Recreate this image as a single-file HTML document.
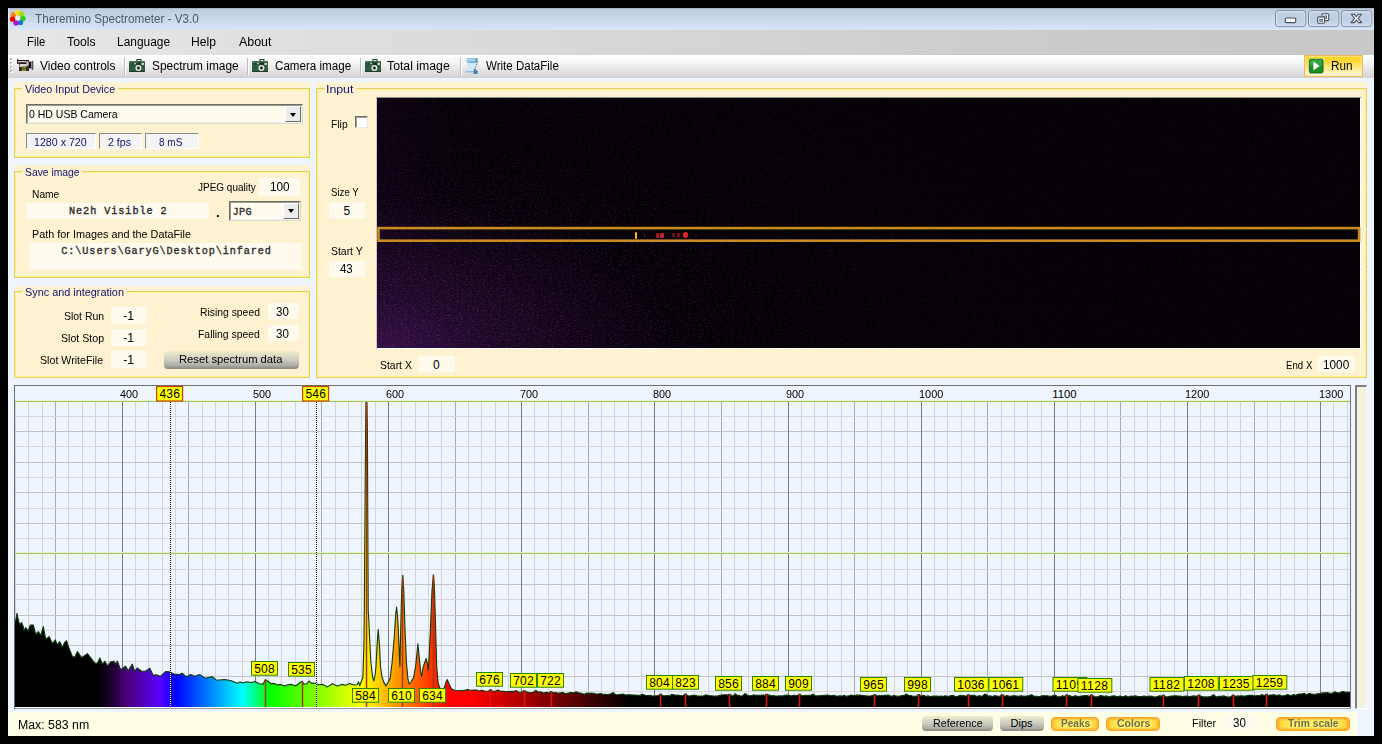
<!DOCTYPE html>
<html><head><meta charset="utf-8"><title>Theremino Spectrometer</title>
<style>
html,body{margin:0;padding:0;}
body{width:1382px;height:744px;background:#000;position:relative;overflow:hidden;font-family:'Liberation Sans', sans-serif;}
.a{position:absolute;box-sizing:border-box;}
.t{position:absolute;white-space:pre;line-height:normal;margin:0;padding:0;transform-origin:0 0;}

.grp{background:#FEF2D0;}
.gb{border:1px solid #F3D774;}
.fld{background:#FFFAEE;}
.sunk{border-top:1px solid #8A8A8A;border-left:1px solid #8A8A8A;border-bottom:1px solid #FFFFFF;border-right:1px solid #FFFFFF;background:#F4F4F4;}
.btn{border-radius:4px;background:linear-gradient(#F2EEC6 0%,#DEDEC8 22%,#CCCCC0 50%,#AEAEA4 80%,#85857E 100%);}
.btny{border-radius:4px;border:1px solid #FFA424;background:linear-gradient(#FFB02A 0%,rgba(255,214,60,0) 24%,rgba(255,214,60,0) 74%,#FFB22C 100%),linear-gradient(90deg,#FFAC28 0%,#FFD640 6%,#FFEE5E 20%,#FFF066 80%,#FFD640 94%,#FFAC28 100%);}
.emb{text-shadow:1px 1px 0 #FFF27A;}

</style></head><body>
<div class="a " style="left:8px;top:8px;width:1366px;height:728px;background:#EEF5FE;"></div>
<div class="a " style="left:8px;top:8px;width:1366px;height:22px;background:linear-gradient(#BCCBDD 0%,#C9D8EA 45%,#D6E5F7 100%);border-left:1px solid rgba(235,242,250,.8);border-top:1px solid #A9B6C6;"></div>
<svg class="a" style="left:8px;top:8px" width="20" height="20" viewBox="0 0 20 20">
<g>
<circle cx="5.4" cy="7" r="2.7" fill="#FF7E10"/>
<circle cx="9.3" cy="4.7" r="2.7" fill="#FFD81A"/>
<circle cx="13.7" cy="6.2" r="2.7" fill="#98E010"/>
<circle cx="15" cy="10.6" r="2.7" fill="#34C818"/>
<circle cx="12.6" cy="14.6" r="2.6" fill="#0A7ACC"/>
<circle cx="8.1" cy="14.9" r="2.7" fill="#A416D6"/>
<circle cx="4.6" cy="11.3" r="2.7" fill="#E60808"/>
<circle cx="9.7" cy="10.1" r="2.4" fill="#E6EEF8"/>
</g></svg><svg class="a" style="left:1270px;top:8px" width="104" height="22" viewBox="0 0 104 22">
<defs><linearGradient id="wb" x1="0" y1="0" x2="0" y2="1"><stop offset="0" stop-color="#C6D3E4"/><stop offset=".5" stop-color="#BFCEE2"/><stop offset="1" stop-color="#C9D9EC"/></linearGradient></defs>
<g fill="url(#wb)" stroke="#7C8AA0" stroke-width="1">
<rect x="5.5" y="2.6" width="30.2" height="16" rx="3"/>
<rect x="38.5" y="2.6" width="30.2" height="16" rx="3"/>
<rect x="71.5" y="2.6" width="30.2" height="16" rx="3"/>
</g>
<g fill="none" stroke="#DCE6F2" stroke-width="1" opacity=".8">
<rect x="6.5" y="3.6" width="28.2" height="14" rx="2"/>
<rect x="39.5" y="3.6" width="28.2" height="14" rx="2"/>
<rect x="72.5" y="3.6" width="28.2" height="14" rx="2"/>
</g>
<rect x="15.3" y="10" width="10.4" height="4.6" rx="1.2" fill="#FAFBFD" stroke="#4A5464" stroke-width="1.2"/>
<g stroke="#4A5464" stroke-width="1.1">
<rect x="51.9" y="5.8" width="6.8" height="6.8" rx="1" fill="#F6F8FB"/>
<rect x="54" y="8" width="2.6" height="2.4" fill="#B4C2D6" stroke-width=".8"/>
<rect x="47.7" y="8.9" width="6.8" height="6.4" rx="1" fill="#F6F8FB"/>
<rect x="49.8" y="11.2" width="2.6" height="2" fill="#B4C2D6" stroke-width=".8"/>
</g>
<path d="M81.2 6.2 L84.2 6.2 L86.4 8.6 L88.6 6.2 L91.6 6.2 L88.1 10.4 L91.8 14.6 L88.7 14.6 L86.4 12.1 L84.1 14.6 L81 14.6 L84.7 10.4 Z" fill="#FAFBFD" stroke="#4A5464" stroke-width="1.1" stroke-linejoin="round"/>
</svg><div class="a " style="left:8px;top:30px;width:1366px;height:24.5px;background:linear-gradient(90deg,#E6E6E6 0%,#DADADA 35%,#CACACA 80%,#C8C8C8 100%);"></div>
<div class="a " style="left:8px;top:54.5px;width:1366px;height:23.5px;background:linear-gradient(#FFFFFF 0%,#F6F6F6 30%,#E4E4E4 65%,#D2D2D2 100%);"></div>
<div class="a " style="left:10px;top:58px;width:2px;height:2px;background:#A8A8A8;"></div>
<div class="a " style="left:11px;top:59px;width:2px;height:2px;background:#FFFFFF;"></div>
<div class="a " style="left:10px;top:62px;width:2px;height:2px;background:#A8A8A8;"></div>
<div class="a " style="left:11px;top:63px;width:2px;height:2px;background:#FFFFFF;"></div>
<div class="a " style="left:10px;top:66px;width:2px;height:2px;background:#A8A8A8;"></div>
<div class="a " style="left:11px;top:67px;width:2px;height:2px;background:#FFFFFF;"></div>
<div class="a " style="left:10px;top:70px;width:2px;height:2px;background:#A8A8A8;"></div>
<div class="a " style="left:11px;top:71px;width:2px;height:2px;background:#FFFFFF;"></div>
<svg class="a" style="left:16px;top:58px" width="18" height="15" viewBox="0 0 18 15">
<rect x="1" y="1.2" width="1.3" height="4.6" fill="#1E1E1E"/>
<rect x="3" y="2" width="10" height="11" fill="#303030"/>
<rect x="2" y="2" width="10.8" height="1.1" fill="#1A1A1A"/>
<rect x="2.6" y="3.1" width="7.6" height="1.4" fill="#D6D6D6"/>
<rect x="2.2" y="4.5" width="8.2" height="1.4" fill="#1E1E1E"/>
<rect x="3.6" y="6" width="7" height="3" fill="#DADADA"/>
<rect x="10.4" y="3.4" width="2.2" height="4.4" fill="#EAB4BE"/>
<rect x="3.2" y="9.4" width="9.8" height="3.6" fill="#2C2C2C"/>
<rect x="5.9" y="8.2" width="4.2" height="4.8" fill="#86862E"/>
<rect x="6.4" y="10" width="3.2" height="1" fill="#4A4A20"/>
<rect x="13" y="3.7" width="2.3" height="6.6" fill="#0A0A0A"/>
<rect x="15.2" y="3" width="1.9" height="8.8" fill="#8C8C8C"/>
<rect x="16.3" y="3" width="0.9" height="8.8" fill="#3A3A3A"/>
</svg><div class="a " style="left:124px;top:58px;width:1px;height:17px;background:#BDBDBD;"></div>
<div class="a " style="left:125px;top:58px;width:1px;height:17px;background:#FFFFFF;"></div>
<svg class="a" style="left:127.8px;top:58px" width="18" height="15" viewBox="0 0 18 15">
<rect x="8.9" y="1.6" width="4" height="2.6" fill="#FFFFFF" stroke="#1F3F30" stroke-width="1.1"/>
<path d="M2 2.9 H16 L17 3.9 V12.9 L16 13.9 H2 L1 12.9 V3.9 Z" fill="#2E5A44"/>
<path d="M2 2.9 H16 L17 3.9 V5 H1 V3.9 Z" fill="#44705A"/>
<rect x="12" y="4" width="5" height="9.2" fill="#37593F"/>
<rect x="1" y="12.9" width="16" height="1" fill="#1C3A2A"/>
<rect x="8.6" y="4.4" width="4.4" height="2.4" fill="#173224"/>
<rect x="4" y="5" width="1.6" height="1.6" fill="#153022"/>
<rect x="6" y="5" width="2" height="1.2" fill="#9CC8AC"/>
<rect x="13.6" y="4.9" width="2.2" height="2" fill="#D8F0E0"/>
<circle cx="10.4" cy="9.9" r="3" fill="#E4EAE0"/>
<path d="M10.4 8.4V11.6M8.9 10H11.9" stroke="#14281C" stroke-width="1.5"/>
</svg><div class="a " style="left:247px;top:58px;width:1px;height:17px;background:#BDBDBD;"></div>
<div class="a " style="left:248px;top:58px;width:1px;height:17px;background:#FFFFFF;"></div>
<svg class="a" style="left:250.8px;top:58px" width="18" height="15" viewBox="0 0 18 15">
<rect x="8.9" y="1.6" width="4" height="2.6" fill="#FFFFFF" stroke="#1F3F30" stroke-width="1.1"/>
<path d="M2 2.9 H16 L17 3.9 V12.9 L16 13.9 H2 L1 12.9 V3.9 Z" fill="#2E5A44"/>
<path d="M2 2.9 H16 L17 3.9 V5 H1 V3.9 Z" fill="#44705A"/>
<rect x="12" y="4" width="5" height="9.2" fill="#37593F"/>
<rect x="1" y="12.9" width="16" height="1" fill="#1C3A2A"/>
<rect x="8.6" y="4.4" width="4.4" height="2.4" fill="#173224"/>
<rect x="4" y="5" width="1.6" height="1.6" fill="#153022"/>
<rect x="6" y="5" width="2" height="1.2" fill="#9CC8AC"/>
<rect x="13.6" y="4.9" width="2.2" height="2" fill="#D8F0E0"/>
<circle cx="10.4" cy="9.9" r="3" fill="#E4EAE0"/>
<path d="M10.4 8.4V11.6M8.9 10H11.9" stroke="#14281C" stroke-width="1.5"/>
</svg><div class="a " style="left:360px;top:58px;width:1px;height:17px;background:#BDBDBD;"></div>
<div class="a " style="left:361px;top:58px;width:1px;height:17px;background:#FFFFFF;"></div>
<svg class="a" style="left:364.2px;top:58px" width="18" height="15" viewBox="0 0 18 15">
<rect x="8.9" y="1.6" width="4" height="2.6" fill="#FFFFFF" stroke="#1F3F30" stroke-width="1.1"/>
<path d="M2 2.9 H16 L17 3.9 V12.9 L16 13.9 H2 L1 12.9 V3.9 Z" fill="#2E5A44"/>
<path d="M2 2.9 H16 L17 3.9 V5 H1 V3.9 Z" fill="#44705A"/>
<rect x="12" y="4" width="5" height="9.2" fill="#37593F"/>
<rect x="1" y="12.9" width="16" height="1" fill="#1C3A2A"/>
<rect x="8.6" y="4.4" width="4.4" height="2.4" fill="#173224"/>
<rect x="4" y="5" width="1.6" height="1.6" fill="#153022"/>
<rect x="6" y="5" width="2" height="1.2" fill="#9CC8AC"/>
<rect x="13.6" y="4.9" width="2.2" height="2" fill="#D8F0E0"/>
<circle cx="10.4" cy="9.9" r="3" fill="#E4EAE0"/>
<path d="M10.4 8.4V11.6M8.9 10H11.9" stroke="#14281C" stroke-width="1.5"/>
</svg><div class="a " style="left:459.5px;top:58px;width:1px;height:17px;background:#BDBDBD;"></div>
<div class="a " style="left:460.5px;top:58px;width:1px;height:17px;background:#FFFFFF;"></div>
<svg class="a" style="left:463px;top:57px" width="17" height="18" viewBox="0 0 17 18">
<defs><linearGradient id="rl" x1="0" y1="0" x2="0" y2="1"><stop offset="0" stop-color="#6FB0DC"/><stop offset=".35" stop-color="#B4E2FA"/><stop offset="1" stop-color="#5C9CCC"/></linearGradient></defs>
<path d="M4.3 5.4 L15 4.6 L13.4 8 L12.2 11.4 L11.2 14.8 L2.3 14.8 L3.4 11 Z" fill="#D3E7F9"/>
<path d="M15 4.6 L13.4 8 L12.2 11.4 L11.2 14.8" fill="none" stroke="#5E7E9E" stroke-width=".9" stroke-dasharray="1.4 1"/>
<rect x="3.3" y="1" width="11.2" height="4.7" rx="2" fill="url(#rl)"/>
<rect x="12.6" y="1.2" width="2" height="4.3" rx="1" fill="#7890A4"/>
<path d="M10.3 14.8 L11.6 11.6 L15 14.4 L14 17 L10.8 17 Z" fill="#3F7FB8"/>
<path d="M2.3 14.8 L10.5 14.8" stroke="#7AA6CC" stroke-width="1"/>
</svg><div class="a " style="left:1304px;top:55px;width:59px;height:22.2px;border:1px solid #EDB85A;background:linear-gradient(#FFD21E 0%,#FFD93C 28%,#FFE88A 62%,#FFF5CC 92%,#FFF9E0 100%);box-shadow:inset 0 0 0 1px rgba(255,240,190,.55);"></div>
<svg class="a" style="left:1308px;top:58px" width="17" height="17" viewBox="0 0 17 17">
<rect x="0.5" y="0.4" width="15.4" height="15.4" rx="1.6" fill="#FFF8DC" opacity=".9"/>
<rect x="1.3" y="1.2" width="13.8" height="13.8" rx="1.4" fill="#1C8E28" stroke="#0C6A18" stroke-width=".9"/>
<rect x="2" y="1.9" width="12.4" height="5.6" rx="1" fill="#52B45A" opacity=".55"/>
<path d="M5.4 3.6 L11.6 8.1 L5.4 12.6 Z" fill="#FFFFFF"/>
</svg><div class="a grp" style="left:14px;top:82px;width:296.4px;height:76px;"></div>
<div class="a " style="left:14px;top:88px;width:296px;height:70px;border:1px solid #E3CC72;box-shadow:inset 0 0 0 1px #FFF382;"></div>
<div class="a " style="left:22.0px;top:88px;width:95.5px;height:2px;background:#FEF2D0;"></div>
<div class="a " style="left:26px;top:104px;width:276.5px;height:20px;border-top:1px solid #6E6E64;border-left:1px solid #6E6E64;border-bottom:1px solid #DADAD0;border-right:1px solid #DADAD0;background:#FFFAEE;"></div>
<div class="a " style="left:27px;top:105px;width:274.5px;height:18px;border-top:1px solid #9C9C90;border-left:1px solid #9C9C90;border-bottom:1px solid #F2F2EA;border-right:1px solid #F2F2EA;"></div>
<div class="a " style="left:285px;top:106px;width:16px;height:16px;background:#EDEDED;border-top:1px solid #FFFFFF;border-left:1px solid #FFFFFF;border-bottom:1px solid #6E6E6E;border-right:1px solid #6E6E6E;"><div class="a" style="left:3.5px;top:5.5px;width:0;height:0;border-left:3.5px solid transparent;border-right:3.5px solid transparent;border-top:4px solid #000"></div></div>
<div class="a sunk" style="left:26px;top:133px;width:69.5px;height:15.5px;"></div>
<div class="a sunk" style="left:99px;top:133px;width:43px;height:15.5px;"></div>
<div class="a sunk" style="left:145px;top:133px;width:53.5px;height:15.5px;"></div>
<div class="a grp" style="left:14px;top:165px;width:296.4px;height:113px;"></div>
<div class="a " style="left:14px;top:171px;width:296px;height:107px;border:1px solid #E3CC72;box-shadow:inset 0 0 0 1px #FFF382;"></div>
<div class="a " style="left:22.0px;top:171px;width:59.5px;height:2px;background:#FEF2D0;"></div>
<div class="a fld" style="left:259px;top:178px;width:40.5px;height:18px;"></div>
<div class="a fld" style="left:26px;top:203px;width:183px;height:16px;"></div>
<div class="a " style="left:229px;top:200.5px;width:72px;height:20px;border-top:1px solid #6E6E64;border-left:1px solid #6E6E64;border-bottom:1px solid #DADAD0;border-right:1px solid #DADAD0;background:#FFFAEE;"></div>
<div class="a " style="left:230px;top:201.5px;width:70px;height:18px;border-top:1px solid #9C9C90;border-left:1px solid #9C9C90;border-bottom:1px solid #F2F2EA;border-right:1px solid #F2F2EA;"></div>
<div class="a " style="left:283px;top:202.5px;width:16px;height:16px;background:#EDEDED;border-top:1px solid #FFFFFF;border-left:1px solid #FFFFFF;border-bottom:1px solid #6E6E6E;border-right:1px solid #6E6E6E;"><div class="a" style="left:3.5px;top:5.5px;width:0;height:0;border-left:3.5px solid transparent;border-right:3.5px solid transparent;border-top:4px solid #000"></div></div>
<div class="a fld" style="left:29px;top:242.5px;width:273px;height:27px;"></div>
<div class="a grp" style="left:14px;top:286px;width:296.4px;height:92px;"></div>
<div class="a " style="left:14px;top:291px;width:296px;height:87px;border:1px solid #E3CC72;box-shadow:inset 0 0 0 1px #FFF382;"></div>
<div class="a " style="left:22.0px;top:291px;width:104.5px;height:2px;background:#FEF2D0;"></div>
<div class="a fld" style="left:111px;top:307px;width:36px;height:17px;"></div>
<div class="a fld" style="left:111px;top:329px;width:36px;height:17px;"></div>
<div class="a fld" style="left:111px;top:351px;width:36px;height:17px;"></div>
<div class="a fld" style="left:268px;top:303px;width:30px;height:16px;"></div>
<div class="a fld" style="left:268px;top:325px;width:30px;height:16px;"></div>
<div class="a btn" style="left:163.5px;top:350.5px;width:135px;height:18.5px;"></div>
<div class="a grp" style="left:316px;top:82px;width:1051.4px;height:296px;"></div>
<div class="a " style="left:316px;top:88px;width:1051px;height:290px;border:1px solid #E3CC72;box-shadow:inset 0 0 0 1px #FFF382;"></div>
<div class="a " style="left:324.5px;top:88px;width:32.5px;height:2px;background:#FEF2D0;"></div>
<div class="a " style="left:355px;top:115.5px;width:12.5px;height:12.5px;border-top:1px solid #6E6E6E;border-left:1px solid #6E6E6E;border-bottom:1px solid #E8E8E8;border-right:1px solid #E8E8E8;background:#FFFFFF;box-shadow:1px 1px 0 0 #9A9A9A inset;"></div>
<div class="a fld" style="left:329px;top:202px;width:36px;height:16px;"></div>
<div class="a fld" style="left:329px;top:260.5px;width:36px;height:16px;"></div>
<div class="a fld" style="left:419px;top:356px;width:36px;height:16px;"></div>
<div class="a fld" style="left:1318px;top:356px;width:36px;height:16px;"></div>
<div class="a " style="left:375.5px;top:96.5px;width:985px;height:252px;background:#FFFFFF;border-top:1px solid #8E8E8E;border-left:1px solid #C8C8C8;"></div>
<div class="a " style="left:376.5px;top:97.5px;width:983.6px;height:250.3px;background:radial-gradient(ellipse 300px 150px at 0% 100%, rgba(60,20,78,.8) 0%, rgba(44,14,58,.5) 40%, rgba(20,6,26,0) 100%),linear-gradient(90deg, rgba(22,7,30,.4) 0%, rgba(12,4,16,.18) 8%, rgba(6,3,8,.05) 20%, rgba(4,2,5,0) 30%),#040204;"></div>
<svg class="a" style="left:376.5px;top:97.5px" width="984" height="250">
<defs>
<filter id="nz" x="0" y="0" width="100%" height="100%" color-interpolation-filters="sRGB">
<feTurbulence type="fractalNoise" baseFrequency="0.45 0.8" numOctaves="2" seed="11" result="n"/>
<feColorMatrix in="n" type="matrix" values="0 0 0 0 0.34  0 0 0 0 0.10  0 0 0 0 0.44  2.2 1.2 0 0 -1.62"/>
</filter>
<radialGradient id="nzm" gradientUnits="userSpaceOnUse" cx="0" cy="250" r="700" gradientTransform="translate(0,250) scale(1,0.5) translate(0,-250)"><stop offset="0" stop-color="#fff" stop-opacity="1"/><stop offset=".3" stop-color="#fff" stop-opacity=".55"/><stop offset=".6" stop-color="#fff" stop-opacity=".28"/><stop offset="1" stop-color="#fff" stop-opacity=".14"/></radialGradient>
<mask id="nzk"><rect width="984" height="250" fill="url(#nzm)"/></mask>
</defs>
<g mask="url(#nzk)"><rect width="984" height="250" filter="url(#nz)"/></g>
</svg><svg class="a" style="left:370px;top:220px" width="1000" height="30" viewBox="370 220 1000 30"><rect x="378.5" y="228.1" width="980.6" height="12.6" fill="none" stroke="#C98A1E" stroke-width="2.6"/></svg><div class="a " style="left:634.5px;top:231.5px;width:2.2px;height:7px;background:#F4B038;border-radius:1px;box-shadow:0 0 1px #A04000;"></div>
<div class="a " style="left:643.5px;top:233.5px;width:1.5px;height:3px;background:#602000;"></div>
<div class="a " style="left:655.5px;top:232.5px;width:3.5px;height:5px;background:#B01818;border-radius:1px;"></div>
<div class="a " style="left:660px;top:232.5px;width:3.5px;height:5px;background:#C82020;border-radius:1px;"></div>
<div class="a " style="left:672px;top:233px;width:3px;height:4px;background:#641010;"></div>
<div class="a " style="left:677px;top:233px;width:3px;height:4px;background:#781010;"></div>
<div class="a " style="left:683px;top:232px;width:4.5px;height:6px;background:#D42828;border-radius:2px;"></div>
<div class="a " style="left:695px;top:233.5px;width:1.5px;height:3px;background:#3A0808;"></div>
<div class="a " style="left:8px;top:711.5px;width:1348.5px;height:24.5px;background:#FFFFE6;"></div>
<div class="a " style="left:14px;top:385px;width:1337px;height:323.5px;background:#EEF5FE;border:1px solid #6E6E6E;border-right-color:#727478;border-bottom-color:#9A9A9A;"></div>
<div class="a " style="left:15px;top:707.0px;width:1335px;height:1px;background:#FFFFFF;"></div>
<svg class="a" style="left:0;top:0" width="1382" height="744" viewBox="0 0 1382 744">
<defs><linearGradient id="sp" gradientUnits="userSpaceOnUse" x1="15" y1="0" x2="1350" y2="0">
<stop offset="0" stop-color="#000"/>
<stop offset="0.06115" stop-color="#000000"/>
<stop offset="0.07262" stop-color="#1E0030"/>
<stop offset="0.08359" stop-color="#48007A"/>
<stop offset="0.09556" stop-color="#5200B8"/>
<stop offset="0.10853" stop-color="#5800FF"/>
<stop offset="0.11651" stop-color="#1C00FF"/>
<stop offset="0.12050" stop-color="#0000FF"/>
<stop offset="0.14544" stop-color="#0080FF"/>
<stop offset="0.17038" stop-color="#00FFFF"/>
<stop offset="0.18035" stop-color="#00FF80"/>
<stop offset="0.19033" stop-color="#00FF00"/>
<stop offset="0.22524" stop-color="#80FF00"/>
<stop offset="0.26015" stop-color="#FFFF00"/>
<stop offset="0.29208" stop-color="#FF8000"/>
<stop offset="0.32499" stop-color="#FF0000"/>
<stop offset="0.34195" stop-color="#FF0000"/>
<stop offset="0.36988" stop-color="#C40000"/>
<stop offset="0.39981" stop-color="#800000"/>
<stop offset="0.42973" stop-color="#400000"/>
<stop offset="0.46165" stop-color="#000000"/>
<stop offset="1" stop-color="#000"/></linearGradient>
<clipPath id="pc"><rect x="15" y="386" width="1335" height="321.0"/></clipPath></defs>
<g shape-rendering="crispEdges"><path d="M15.5 402V707.0" stroke="#D3D3D3" stroke-width="1"/><path d="M28.5 402V707.0" stroke="#D3D3D3" stroke-width="1"/><path d="M42.5 402V707.0" stroke="#D3D3D3" stroke-width="1"/><path d="M55.5 402V707.0" stroke="#ABABAB" stroke-width="1"/><path d="M68.5 402V707.0" stroke="#D3D3D3" stroke-width="1"/><path d="M82.5 402V707.0" stroke="#D3D3D3" stroke-width="1"/><path d="M95.5 402V707.0" stroke="#D3D3D3" stroke-width="1"/><path d="M108.5 402V707.0" stroke="#D3D3D3" stroke-width="1"/><path d="M135.5 402V707.0" stroke="#D3D3D3" stroke-width="1"/><path d="M148.5 402V707.0" stroke="#D3D3D3" stroke-width="1"/><path d="M162.5 402V707.0" stroke="#D3D3D3" stroke-width="1"/><path d="M175.5 402V707.0" stroke="#D3D3D3" stroke-width="1"/><path d="M188.5 402V707.0" stroke="#ABABAB" stroke-width="1"/><path d="M202.5 402V707.0" stroke="#D3D3D3" stroke-width="1"/><path d="M215.5 402V707.0" stroke="#D3D3D3" stroke-width="1"/><path d="M228.5 402V707.0" stroke="#D3D3D3" stroke-width="1"/><path d="M242.5 402V707.0" stroke="#D3D3D3" stroke-width="1"/><path d="M268.5 402V707.0" stroke="#D3D3D3" stroke-width="1"/><path d="M281.5 402V707.0" stroke="#D3D3D3" stroke-width="1"/><path d="M295.5 402V707.0" stroke="#D3D3D3" stroke-width="1"/><path d="M308.5 402V707.0" stroke="#D3D3D3" stroke-width="1"/><path d="M321.5 402V707.0" stroke="#ABABAB" stroke-width="1"/><path d="M335.5 402V707.0" stroke="#D3D3D3" stroke-width="1"/><path d="M348.5 402V707.0" stroke="#D3D3D3" stroke-width="1"/><path d="M361.5 402V707.0" stroke="#D3D3D3" stroke-width="1"/><path d="M375.5 402V707.0" stroke="#D3D3D3" stroke-width="1"/><path d="M401.5 402V707.0" stroke="#D3D3D3" stroke-width="1"/><path d="M415.5 402V707.0" stroke="#D3D3D3" stroke-width="1"/><path d="M428.5 402V707.0" stroke="#D3D3D3" stroke-width="1"/><path d="M441.5 402V707.0" stroke="#D3D3D3" stroke-width="1"/><path d="M455.5 402V707.0" stroke="#ABABAB" stroke-width="1"/><path d="M468.5 402V707.0" stroke="#D3D3D3" stroke-width="1"/><path d="M481.5 402V707.0" stroke="#D3D3D3" stroke-width="1"/><path d="M495.5 402V707.0" stroke="#D3D3D3" stroke-width="1"/><path d="M508.5 402V707.0" stroke="#D3D3D3" stroke-width="1"/><path d="M534.5 402V707.0" stroke="#D3D3D3" stroke-width="1"/><path d="M548.5 402V707.0" stroke="#D3D3D3" stroke-width="1"/><path d="M561.5 402V707.0" stroke="#D3D3D3" stroke-width="1"/><path d="M574.5 402V707.0" stroke="#D3D3D3" stroke-width="1"/><path d="M588.5 402V707.0" stroke="#ABABAB" stroke-width="1"/><path d="M601.5 402V707.0" stroke="#D3D3D3" stroke-width="1"/><path d="M614.5 402V707.0" stroke="#D3D3D3" stroke-width="1"/><path d="M628.5 402V707.0" stroke="#D3D3D3" stroke-width="1"/><path d="M641.5 402V707.0" stroke="#D3D3D3" stroke-width="1"/><path d="M668.5 402V707.0" stroke="#D3D3D3" stroke-width="1"/><path d="M681.5 402V707.0" stroke="#D3D3D3" stroke-width="1"/><path d="M694.5 402V707.0" stroke="#D3D3D3" stroke-width="1"/><path d="M708.5 402V707.0" stroke="#D3D3D3" stroke-width="1"/><path d="M721.5 402V707.0" stroke="#ABABAB" stroke-width="1"/><path d="M734.5 402V707.0" stroke="#D3D3D3" stroke-width="1"/><path d="M748.5 402V707.0" stroke="#D3D3D3" stroke-width="1"/><path d="M761.5 402V707.0" stroke="#D3D3D3" stroke-width="1"/><path d="M774.5 402V707.0" stroke="#D3D3D3" stroke-width="1"/><path d="M801.5 402V707.0" stroke="#D3D3D3" stroke-width="1"/><path d="M814.5 402V707.0" stroke="#D3D3D3" stroke-width="1"/><path d="M827.5 402V707.0" stroke="#D3D3D3" stroke-width="1"/><path d="M841.5 402V707.0" stroke="#D3D3D3" stroke-width="1"/><path d="M854.5 402V707.0" stroke="#ABABAB" stroke-width="1"/><path d="M867.5 402V707.0" stroke="#D3D3D3" stroke-width="1"/><path d="M881.5 402V707.0" stroke="#D3D3D3" stroke-width="1"/><path d="M894.5 402V707.0" stroke="#D3D3D3" stroke-width="1"/><path d="M907.5 402V707.0" stroke="#D3D3D3" stroke-width="1"/><path d="M934.5 402V707.0" stroke="#D3D3D3" stroke-width="1"/><path d="M947.5 402V707.0" stroke="#D3D3D3" stroke-width="1"/><path d="M961.5 402V707.0" stroke="#D3D3D3" stroke-width="1"/><path d="M974.5 402V707.0" stroke="#D3D3D3" stroke-width="1"/><path d="M987.5 402V707.0" stroke="#ABABAB" stroke-width="1"/><path d="M1001.5 402V707.0" stroke="#D3D3D3" stroke-width="1"/><path d="M1014.5 402V707.0" stroke="#D3D3D3" stroke-width="1"/><path d="M1027.5 402V707.0" stroke="#D3D3D3" stroke-width="1"/><path d="M1041.5 402V707.0" stroke="#D3D3D3" stroke-width="1"/><path d="M1067.5 402V707.0" stroke="#D3D3D3" stroke-width="1"/><path d="M1080.5 402V707.0" stroke="#D3D3D3" stroke-width="1"/><path d="M1094.5 402V707.0" stroke="#D3D3D3" stroke-width="1"/><path d="M1107.5 402V707.0" stroke="#D3D3D3" stroke-width="1"/><path d="M1120.5 402V707.0" stroke="#ABABAB" stroke-width="1"/><path d="M1134.5 402V707.0" stroke="#D3D3D3" stroke-width="1"/><path d="M1147.5 402V707.0" stroke="#D3D3D3" stroke-width="1"/><path d="M1160.5 402V707.0" stroke="#D3D3D3" stroke-width="1"/><path d="M1174.5 402V707.0" stroke="#D3D3D3" stroke-width="1"/><path d="M1200.5 402V707.0" stroke="#D3D3D3" stroke-width="1"/><path d="M1214.5 402V707.0" stroke="#D3D3D3" stroke-width="1"/><path d="M1227.5 402V707.0" stroke="#D3D3D3" stroke-width="1"/><path d="M1240.5 402V707.0" stroke="#D3D3D3" stroke-width="1"/><path d="M1254.5 402V707.0" stroke="#ABABAB" stroke-width="1"/><path d="M1267.5 402V707.0" stroke="#D3D3D3" stroke-width="1"/><path d="M1280.5 402V707.0" stroke="#D3D3D3" stroke-width="1"/><path d="M1294.5 402V707.0" stroke="#D3D3D3" stroke-width="1"/><path d="M1307.5 402V707.0" stroke="#D3D3D3" stroke-width="1"/><path d="M1333.5 402V707.0" stroke="#D3D3D3" stroke-width="1"/><path d="M1347.5 402V707.0" stroke="#D3D3D3" stroke-width="1"/><path d="M15 416.5H1350" stroke="#D8D8D8" stroke-width="1"/><path d="M15 431.5H1350" stroke="#C4C4C4" stroke-width="1"/><path d="M15 446.5H1350" stroke="#D8D8D8" stroke-width="1"/><path d="M15 462.5H1350" stroke="#C4C4C4" stroke-width="1"/><path d="M15 477.5H1350" stroke="#D8D8D8" stroke-width="1"/><path d="M15 492.5H1350" stroke="#C4C4C4" stroke-width="1"/><path d="M15 508.5H1350" stroke="#D8D8D8" stroke-width="1"/><path d="M15 523.5H1350" stroke="#C4C4C4" stroke-width="1"/><path d="M15 538.5H1350" stroke="#D8D8D8" stroke-width="1"/><path d="M15 569.5H1350" stroke="#D8D8D8" stroke-width="1"/><path d="M15 584.5H1350" stroke="#C4C4C4" stroke-width="1"/><path d="M15 599.5H1350" stroke="#D8D8D8" stroke-width="1"/><path d="M15 615.5H1350" stroke="#C4C4C4" stroke-width="1"/><path d="M15 630.5H1350" stroke="#D8D8D8" stroke-width="1"/><path d="M15 645.5H1350" stroke="#C4C4C4" stroke-width="1"/><path d="M15 661.5H1350" stroke="#D8D8D8" stroke-width="1"/><path d="M15 676.5H1350" stroke="#C4C4C4" stroke-width="1"/><path d="M15 691.5H1350" stroke="#D8D8D8" stroke-width="1"/><path d="M122.5 402V707.0" stroke="#7C7C7C" stroke-width="1.2"/><path d="M255.5 402V707.0" stroke="#7C7C7C" stroke-width="1.2"/><path d="M388.5 402V707.0" stroke="#7C7C7C" stroke-width="1.2"/><path d="M521.5 402V707.0" stroke="#7C7C7C" stroke-width="1.2"/><path d="M654.5 402V707.0" stroke="#7C7C7C" stroke-width="1.2"/><path d="M788.5 402V707.0" stroke="#7C7C7C" stroke-width="1.2"/><path d="M921.5 402V707.0" stroke="#7C7C7C" stroke-width="1.2"/><path d="M1054.5 402V707.0" stroke="#7C7C7C" stroke-width="1.2"/><path d="M1187.5 402V707.0" stroke="#7C7C7C" stroke-width="1.2"/><path d="M1320.5 402V707.0" stroke="#7C7C7C" stroke-width="1.2"/><path d="M15 400.5H1350" stroke="#E6F6CC" stroke-width="1"/><path d="M15 401.5H1350" stroke="#A0C45E" stroke-width="1.2"/><path d="M15 552.5H1350" stroke="#E2F4C4" stroke-width="1"/><path d="M15 553.5H1350" stroke="#A0C45E" stroke-width="1.2"/></g>
<g clip-path="url(#pc)"><polygon points="15.0,707.0 15.0,621.6 15.8,620.0 17.0,613.3 18.3,620.0 19.7,624.6 21.6,622.5 23.3,626.6 24.1,630.8 25.8,627.5 28.0,631.3 30.3,625.0 33.3,625.0 35.8,634.6 38.3,631.6 40.8,635.3 43.3,626.6 45.8,639.3 49.1,636.6 52.4,643.6 55.3,639.9 57.4,644.9 59.6,641.6 62.4,647.6 64.6,642.4 66.6,640.8 69.1,648.3 72.4,656.6 74.9,656.9 77.4,651.6 81.6,657.6 87.4,653.6 94.9,663.2 97.4,663.2 99.9,657.9 102.4,664.2 104.9,661.2 107.4,665.9 110.7,661.9 114.0,661.2 115.7,664.2 117.3,661.2 120.7,669.6 125.7,666.2 128.2,670.9 132.3,664.1 134.8,671.6 137.3,667.9 141.5,671.2 145.6,671.2 149.8,668.2 153.1,675.2 156.4,674.9 160.6,676.2 165.6,671.6 169.8,671.9 173.9,674.1 179.7,674.6 182.2,673.2 186.4,676.9 190.6,674.6 194.7,676.2 199.7,674.6 205.5,678.2 212.2,676.6 216.4,680.2 224.7,679.5 231.3,680.7 237.2,683.2 240.0,681.9 243.2,683.1 246.4,681.8 251.1,682.5 255.1,681.5 259.1,683.7 263.1,684.1 265.5,679.6 267.9,681.2 271.0,683.7 274.2,683.4 277.4,685.0 280.6,684.4 284.6,686.0 287.8,684.7 291.7,684.4 295.7,686.0 299.7,682.8 302.1,681.2 303.7,684.1 306.9,683.7 309.2,681.2 311.6,683.4 314.8,683.1 318.8,684.7 322.8,684.4 327.6,686.9 332.3,683.7 337.1,686.0 341.9,684.4 345.9,685.3 349.8,683.4 353.8,685.0 357.0,684.7 358.6,681.8 359.7,685.8 361.8,680.2 362.9,677.5 363.9,645.9 364.3,611.1 365.6,430.0 366.0,402.5 366.9,402.5 367.4,430.0 368.2,611.1 368.8,619.3 369.8,641.8 370.9,662.2 372.7,677.5 373.9,681.0 375.2,674.5 376.0,666.3 377.0,645.9 378.2,629.5 379.5,645.9 380.5,666.3 381.9,676.5 383.9,682.6 386.0,685.9 388.0,682.6 390.1,678.6 392.1,662.2 394.2,637.7 395.6,615.2 396.6,607.0 397.8,619.3 399.1,647.9 399.9,666.7 400.7,629.5 401.7,590.7 402.8,575.3 403.8,590.7 405.0,629.5 406.4,662.2 407.9,678.6 409.1,683.9 410.7,682.6 413.6,677.5 415.6,666.3 417.1,652.0 417.9,643.8 419.3,658.1 420.7,672.4 421.6,676.5 422.8,668.3 424.8,662.2 426.3,658.5 427.5,664.3 428.3,670.4 429.1,656.1 430.4,629.5 432.0,590.7 433.4,574.7 434.4,586.6 435.7,631.5 436.7,666.3 438.1,682.6 439.6,688.0 441.8,688.8 444.3,688.0 445.9,682.2 447.3,679.6 449.0,683.7 451.4,688.8 454.5,690.2 462.6,690.8 467.8,689.6 470.0,690.2 471.5,690.3 474.3,690.0 476.5,690.1 478.1,690.6 479.8,690.7 481.5,690.4 484.9,691.0 488.5,691.3 489.8,689.8 491.2,689.8 492.5,691.3 495.2,691.4 497.8,689.9 500.7,691.3 503.4,691.4 506.5,691.8 509.1,691.6 512.1,691.4 513.8,691.6 515.6,690.5 518.6,692.0 520.8,692.2 522.3,692.2 523.6,690.7 525.0,690.7 526.3,692.2 526.8,692.0 528.4,692.4 531.9,692.7 534.2,691.5 536.0,690.4 537.8,692.0 541.0,691.9 543.6,693.1 546.9,692.3 549.1,693.0 550.4,691.5 551.8,691.5 553.1,693.0 554.9,692.2 557.1,693.0 560.0,693.0 562.8,692.4 565.9,693.7 568.2,693.0 571.0,692.6 572.9,692.8 574.5,692.6 576.2,691.7 578.9,692.9 581.1,693.3 584.3,694.2 586.8,693.0 589.0,693.3 590.8,693.0 593.3,693.2 594.9,693.8 598.1,694.1 600.3,693.4 602.9,694.3 604.9,694.4 608.1,694.5 611.0,693.8 613.3,692.6 615.3,694.5 617.7,694.9 621.1,694.2 623.0,694.0 625.8,695.0 628.2,694.7 629.9,694.8 633.0,695.0 634.8,695.1 637.9,695.4 640.2,695.4 642.1,694.3 645.4,695.3 648.5,695.6 650.7,695.4 652.3,696.0 654.8,695.9 658.1,695.8 658.6,695.5 659.9,694.0 661.3,694.0 662.6,695.5 664.5,695.9 666.9,695.5 669.3,695.9 671.8,694.3 673.7,694.7 675.5,695.3 678.1,695.1 680.8,695.8 683.4,695.6 684.7,694.1 686.1,694.1 687.4,695.6 689.4,696.0 692.2,695.4 695.1,695.3 697.5,696.0 700.8,696.0 703.4,696.0 705.2,694.9 706.8,695.1 709.6,695.8 711.4,695.7 713.2,696.0 715.2,696.1 717.6,696.1 719.5,695.3 721.6,695.0 724.6,694.8 727.0,694.8 727.4,695.7 728.7,694.2 730.1,694.2 731.4,695.7 733.2,695.9 734.9,693.8 736.9,695.0 740.3,695.9 742.1,696.1 745.0,693.6 747.3,694.9 750.1,695.9 753.3,694.9 755.7,695.3 759.1,695.2 761.6,695.2 763.4,694.9 764.8,695.7 766.1,694.2 767.5,694.2 768.8,695.7 769.8,694.9 771.4,695.9 773.2,695.5 775.0,696.0 777.4,696.0 780.0,695.8 782.1,696.0 784.9,695.4 786.5,695.1 789.5,695.2 791.2,696.1 794.0,695.3 796.1,695.5 797.5,695.8 798.8,694.3 800.2,694.3 801.5,695.8 801.9,695.7 805.4,695.4 806.9,695.5 809.4,695.2 810.9,695.3 813.2,694.1 815.2,695.8 818.2,695.9 821.4,695.5 824.9,695.2 827.7,695.0 831.0,695.9 834.1,695.2 836.6,696.2 839.7,695.8 842.6,696.0 844.2,695.2 845.9,696.2 848.6,695.9 851.1,695.0 854.1,695.7 856.9,695.1 858.9,695.1 861.9,695.3 865.3,695.7 867.8,696.0 870.5,696.0 872.3,695.4 872.7,696.0 874.0,694.5 875.4,694.5 876.7,696.0 879.3,695.5 881.8,695.7 885.0,695.4 888.4,695.1 891.6,696.5 893.6,695.4 895.5,695.9 898.1,696.4 901.2,695.8 904.1,695.4 906.6,694.1 909.0,695.6 911.2,695.6 912.7,696.2 914.4,696.4 916.7,696.1 918.0,694.6 919.4,694.6 920.7,696.1 922.2,695.8 923.8,695.3 925.9,696.5 927.9,695.9 930.2,696.5 933.3,696.1 936.7,696.0 938.3,696.2 941.3,696.1 942.9,696.5 945.3,695.7 948.3,696.6 951.1,695.6 953.4,695.5 955.3,696.5 957.3,696.5 959.7,695.4 961.3,695.7 963.3,695.6 966.5,696.2 967.8,694.7 969.2,694.7 970.5,696.2 971.1,695.4 974.5,695.4 977.3,696.5 979.3,695.6 981.7,696.6 985.0,694.0 988.3,696.0 989.8,695.9 992.9,696.5 994.9,695.5 997.5,696.3 1000.3,696.2 1001.6,694.7 1003.0,694.7 1004.3,696.2 1004.8,696.6 1006.9,695.5 1009.7,696.3 1011.3,696.1 1013.6,695.7 1015.1,695.8 1018.5,696.3 1021.0,695.7 1024.4,696.4 1025.9,696.1 1028.3,695.7 1031.6,694.8 1034.0,696.3 1037.1,696.4 1039.0,696.8 1042.1,695.7 1045.1,695.8 1047.6,695.7 1049.9,696.4 1051.7,696.0 1055.2,695.0 1057.5,696.7 1060.4,696.8 1062.6,695.7 1064.8,696.4 1066.1,694.9 1067.5,694.9 1068.8,696.4 1069.7,695.5 1071.9,696.8 1075.3,695.8 1078.5,696.6 1080.1,696.2 1083.4,695.8 1086.7,695.5 1089.6,696.4 1090.9,694.9 1092.3,694.9 1093.6,696.4 1094.4,696.8 1096.5,696.9 1098.5,696.5 1100.6,695.5 1103.9,696.4 1105.4,695.9 1108.9,696.9 1110.9,696.2 1114.2,695.8 1117.2,696.7 1119.9,696.0 1122.1,696.7 1124.0,696.6 1125.7,695.6 1127.8,697.0 1131.3,696.0 1133.0,696.3 1135.4,695.9 1138.1,696.6 1141.3,696.5 1144.5,696.0 1146.7,696.7 1148.7,696.0 1152.0,696.4 1154.3,697.0 1156.2,696.8 1159.7,695.8 1161.3,696.6 1162.6,695.1 1164.0,695.1 1165.3,696.6 1166.3,697.0 1169.7,696.2 1172.1,696.0 1175.5,695.8 1178.2,696.0 1180.0,696.0 1182.7,696.6 1184.2,696.2 1186.1,696.1 1189.2,696.5 1190.9,696.3 1193.7,695.9 1196.6,696.3 1196.8,696.6 1198.1,695.1 1199.5,695.1 1200.8,696.6 1201.3,696.2 1204.5,697.1 1206.4,696.8 1207.9,697.0 1211.1,696.3 1213.5,694.8 1216.3,697.0 1219.0,696.3 1220.8,696.2 1224.2,695.9 1227.3,697.1 1229.0,697.1 1231.2,696.6 1232.5,695.1 1233.9,695.1 1235.2,696.6 1236.9,695.9 1238.9,696.1 1242.0,695.8 1244.3,696.2 1246.1,695.7 1249.4,695.4 1252.4,695.3 1254.1,696.0 1256.9,695.6 1259.5,695.7 1261.9,694.4 1264.5,695.8 1265.8,694.3 1267.2,694.3 1268.5,695.8 1269.9,695.0 1272.3,694.9 1274.8,694.7 1276.5,695.7 1279.0,694.7 1281.2,695.9 1284.5,695.8 1287.6,694.6 1290.1,695.6 1291.9,695.3 1293.5,694.6 1295.3,695.3 1298.5,694.0 1301.8,694.0 1304.3,693.2 1306.1,694.7 1309.4,693.5 1311.2,693.9 1313.4,694.3 1316.0,694.1 1319.5,693.6 1322.6,692.9 1325.3,692.9 1327.7,692.5 1329.3,693.4 1332.0,693.4 1334.9,691.7 1336.7,692.7 1339.2,692.9 1341.2,691.9 1343.4,691.6 1345.3,692.2 1347.2,692.1 1349.0,692.5 1350.0,691.8 1350,707.0" fill="url(#sp)"/>
<polyline points="15.0,621.6 15.8,620.0 17.0,613.3 18.3,620.0 19.7,624.6 21.6,622.5 23.3,626.6 24.1,630.8 25.8,627.5 28.0,631.3 30.3,625.0 33.3,625.0 35.8,634.6 38.3,631.6 40.8,635.3 43.3,626.6 45.8,639.3 49.1,636.6 52.4,643.6 55.3,639.9 57.4,644.9 59.6,641.6 62.4,647.6 64.6,642.4 66.6,640.8 69.1,648.3 72.4,656.6 74.9,656.9 77.4,651.6 81.6,657.6 87.4,653.6 94.9,663.2 97.4,663.2 99.9,657.9 102.4,664.2 104.9,661.2 107.4,665.9 110.7,661.9 114.0,661.2 115.7,664.2 117.3,661.2 120.7,669.6 125.7,666.2 128.2,670.9 132.3,664.1 134.8,671.6 137.3,667.9 141.5,671.2 145.6,671.2 149.8,668.2 153.1,675.2 156.4,674.9 160.6,676.2 165.6,671.6 169.8,671.9 173.9,674.1 179.7,674.6 182.2,673.2 186.4,676.9 190.6,674.6 194.7,676.2 199.7,674.6 205.5,678.2 212.2,676.6 216.4,680.2 224.7,679.5 231.3,680.7 237.2,683.2 240.0,681.9 243.2,683.1 246.4,681.8 251.1,682.5 255.1,681.5 259.1,683.7 263.1,684.1 265.5,679.6 267.9,681.2 271.0,683.7 274.2,683.4 277.4,685.0 280.6,684.4 284.6,686.0 287.8,684.7 291.7,684.4 295.7,686.0 299.7,682.8 302.1,681.2 303.7,684.1 306.9,683.7 309.2,681.2 311.6,683.4 314.8,683.1 318.8,684.7 322.8,684.4 327.6,686.9 332.3,683.7 337.1,686.0 341.9,684.4 345.9,685.3 349.8,683.4 353.8,685.0 357.0,684.7 358.6,681.8 359.7,685.8 361.8,680.2 362.9,677.5 363.9,645.9 364.3,611.1 365.6,430.0 366.0,402.5 366.9,402.5 367.4,430.0 368.2,611.1 368.8,619.3 369.8,641.8 370.9,662.2 372.7,677.5 373.9,681.0 375.2,674.5 376.0,666.3 377.0,645.9 378.2,629.5 379.5,645.9 380.5,666.3 381.9,676.5 383.9,682.6 386.0,685.9 388.0,682.6 390.1,678.6 392.1,662.2 394.2,637.7 395.6,615.2 396.6,607.0 397.8,619.3 399.1,647.9 399.9,666.7 400.7,629.5 401.7,590.7 402.8,575.3 403.8,590.7 405.0,629.5 406.4,662.2 407.9,678.6 409.1,683.9 410.7,682.6 413.6,677.5 415.6,666.3 417.1,652.0 417.9,643.8 419.3,658.1 420.7,672.4 421.6,676.5 422.8,668.3 424.8,662.2 426.3,658.5 427.5,664.3 428.3,670.4 429.1,656.1 430.4,629.5 432.0,590.7 433.4,574.7 434.4,586.6 435.7,631.5 436.7,666.3 438.1,682.6 439.6,688.0 441.8,688.8 444.3,688.0 445.9,682.2 447.3,679.6 449.0,683.7 451.4,688.8 454.5,690.2 462.6,690.8 467.8,689.6 470.0,690.2 471.5,690.3 474.3,690.0 476.5,690.1 478.1,690.6 479.8,690.7 481.5,690.4 484.9,691.0 488.5,691.3 489.8,689.8 491.2,689.8 492.5,691.3 495.2,691.4 497.8,689.9 500.7,691.3 503.4,691.4 506.5,691.8 509.1,691.6 512.1,691.4 513.8,691.6 515.6,690.5 518.6,692.0 520.8,692.2 522.3,692.2 523.6,690.7 525.0,690.7 526.3,692.2 526.8,692.0 528.4,692.4 531.9,692.7 534.2,691.5 536.0,690.4 537.8,692.0 541.0,691.9 543.6,693.1 546.9,692.3 549.1,693.0 550.4,691.5 551.8,691.5 553.1,693.0 554.9,692.2 557.1,693.0 560.0,693.0 562.8,692.4 565.9,693.7 568.2,693.0 571.0,692.6 572.9,692.8 574.5,692.6 576.2,691.7 578.9,692.9 581.1,693.3 584.3,694.2 586.8,693.0 589.0,693.3 590.8,693.0 593.3,693.2 594.9,693.8 598.1,694.1 600.3,693.4 602.9,694.3 604.9,694.4 608.1,694.5 611.0,693.8 613.3,692.6 615.3,694.5 617.7,694.9 621.1,694.2 623.0,694.0 625.8,695.0 628.2,694.7 629.9,694.8 633.0,695.0 634.8,695.1 637.9,695.4 640.2,695.4 642.1,694.3 645.4,695.3 648.5,695.6 650.7,695.4 652.3,696.0 654.8,695.9 658.1,695.8 658.6,695.5 659.9,694.0 661.3,694.0 662.6,695.5 664.5,695.9 666.9,695.5 669.3,695.9 671.8,694.3 673.7,694.7 675.5,695.3 678.1,695.1 680.8,695.8 683.4,695.6 684.7,694.1 686.1,694.1 687.4,695.6 689.4,696.0 692.2,695.4 695.1,695.3 697.5,696.0 700.8,696.0 703.4,696.0 705.2,694.9 706.8,695.1 709.6,695.8 711.4,695.7 713.2,696.0 715.2,696.1 717.6,696.1 719.5,695.3 721.6,695.0 724.6,694.8 727.0,694.8 727.4,695.7 728.7,694.2 730.1,694.2 731.4,695.7 733.2,695.9 734.9,693.8 736.9,695.0 740.3,695.9 742.1,696.1 745.0,693.6 747.3,694.9 750.1,695.9 753.3,694.9 755.7,695.3 759.1,695.2 761.6,695.2 763.4,694.9 764.8,695.7 766.1,694.2 767.5,694.2 768.8,695.7 769.8,694.9 771.4,695.9 773.2,695.5 775.0,696.0 777.4,696.0 780.0,695.8 782.1,696.0 784.9,695.4 786.5,695.1 789.5,695.2 791.2,696.1 794.0,695.3 796.1,695.5 797.5,695.8 798.8,694.3 800.2,694.3 801.5,695.8 801.9,695.7 805.4,695.4 806.9,695.5 809.4,695.2 810.9,695.3 813.2,694.1 815.2,695.8 818.2,695.9 821.4,695.5 824.9,695.2 827.7,695.0 831.0,695.9 834.1,695.2 836.6,696.2 839.7,695.8 842.6,696.0 844.2,695.2 845.9,696.2 848.6,695.9 851.1,695.0 854.1,695.7 856.9,695.1 858.9,695.1 861.9,695.3 865.3,695.7 867.8,696.0 870.5,696.0 872.3,695.4 872.7,696.0 874.0,694.5 875.4,694.5 876.7,696.0 879.3,695.5 881.8,695.7 885.0,695.4 888.4,695.1 891.6,696.5 893.6,695.4 895.5,695.9 898.1,696.4 901.2,695.8 904.1,695.4 906.6,694.1 909.0,695.6 911.2,695.6 912.7,696.2 914.4,696.4 916.7,696.1 918.0,694.6 919.4,694.6 920.7,696.1 922.2,695.8 923.8,695.3 925.9,696.5 927.9,695.9 930.2,696.5 933.3,696.1 936.7,696.0 938.3,696.2 941.3,696.1 942.9,696.5 945.3,695.7 948.3,696.6 951.1,695.6 953.4,695.5 955.3,696.5 957.3,696.5 959.7,695.4 961.3,695.7 963.3,695.6 966.5,696.2 967.8,694.7 969.2,694.7 970.5,696.2 971.1,695.4 974.5,695.4 977.3,696.5 979.3,695.6 981.7,696.6 985.0,694.0 988.3,696.0 989.8,695.9 992.9,696.5 994.9,695.5 997.5,696.3 1000.3,696.2 1001.6,694.7 1003.0,694.7 1004.3,696.2 1004.8,696.6 1006.9,695.5 1009.7,696.3 1011.3,696.1 1013.6,695.7 1015.1,695.8 1018.5,696.3 1021.0,695.7 1024.4,696.4 1025.9,696.1 1028.3,695.7 1031.6,694.8 1034.0,696.3 1037.1,696.4 1039.0,696.8 1042.1,695.7 1045.1,695.8 1047.6,695.7 1049.9,696.4 1051.7,696.0 1055.2,695.0 1057.5,696.7 1060.4,696.8 1062.6,695.7 1064.8,696.4 1066.1,694.9 1067.5,694.9 1068.8,696.4 1069.7,695.5 1071.9,696.8 1075.3,695.8 1078.5,696.6 1080.1,696.2 1083.4,695.8 1086.7,695.5 1089.6,696.4 1090.9,694.9 1092.3,694.9 1093.6,696.4 1094.4,696.8 1096.5,696.9 1098.5,696.5 1100.6,695.5 1103.9,696.4 1105.4,695.9 1108.9,696.9 1110.9,696.2 1114.2,695.8 1117.2,696.7 1119.9,696.0 1122.1,696.7 1124.0,696.6 1125.7,695.6 1127.8,697.0 1131.3,696.0 1133.0,696.3 1135.4,695.9 1138.1,696.6 1141.3,696.5 1144.5,696.0 1146.7,696.7 1148.7,696.0 1152.0,696.4 1154.3,697.0 1156.2,696.8 1159.7,695.8 1161.3,696.6 1162.6,695.1 1164.0,695.1 1165.3,696.6 1166.3,697.0 1169.7,696.2 1172.1,696.0 1175.5,695.8 1178.2,696.0 1180.0,696.0 1182.7,696.6 1184.2,696.2 1186.1,696.1 1189.2,696.5 1190.9,696.3 1193.7,695.9 1196.6,696.3 1196.8,696.6 1198.1,695.1 1199.5,695.1 1200.8,696.6 1201.3,696.2 1204.5,697.1 1206.4,696.8 1207.9,697.0 1211.1,696.3 1213.5,694.8 1216.3,697.0 1219.0,696.3 1220.8,696.2 1224.2,695.9 1227.3,697.1 1229.0,697.1 1231.2,696.6 1232.5,695.1 1233.9,695.1 1235.2,696.6 1236.9,695.9 1238.9,696.1 1242.0,695.8 1244.3,696.2 1246.1,695.7 1249.4,695.4 1252.4,695.3 1254.1,696.0 1256.9,695.6 1259.5,695.7 1261.9,694.4 1264.5,695.8 1265.8,694.3 1267.2,694.3 1268.5,695.8 1269.9,695.0 1272.3,694.9 1274.8,694.7 1276.5,695.7 1279.0,694.7 1281.2,695.9 1284.5,695.8 1287.6,694.6 1290.1,695.6 1291.9,695.3 1293.5,694.6 1295.3,695.3 1298.5,694.0 1301.8,694.0 1304.3,693.2 1306.1,694.7 1309.4,693.5 1311.2,693.9 1313.4,694.3 1316.0,694.1 1319.5,693.6 1322.6,692.9 1325.3,692.9 1327.7,692.5 1329.3,693.4 1332.0,693.4 1334.9,691.7 1336.7,692.7 1339.2,692.9 1341.2,691.9 1343.4,691.6 1345.3,692.2 1347.2,692.1 1349.0,692.5 1350.0,691.8" fill="none" stroke="#0C3A0C" stroke-width="1.1" stroke-linejoin="round"/>
</g>
<path d="M170.5 402V707.0" stroke="#FFF" stroke-width="1" stroke-dasharray="1 1" stroke-dashoffset="1" shape-rendering="crispEdges"/>
<path d="M170.5 402V707.0" stroke="#000" stroke-width="1" stroke-dasharray="1 1" shape-rendering="crispEdges"/>
<path d="M316.5 402V707.0" stroke="#FFF" stroke-width="1" stroke-dasharray="1 1" stroke-dashoffset="1" shape-rendering="crispEdges"/>
<path d="M316.5 402V707.0" stroke="#000" stroke-width="1" stroke-dasharray="1 1" shape-rendering="crispEdges"/>
<path d="M265.5 679.8V707.0" stroke="#A83410" stroke-width="1.5"/>
<path d="M302.5 681.3V707.0" stroke="#A83410" stroke-width="1.5"/>
<path d="M366.5 402.5V707.0" stroke="#A83410" stroke-width="1.5"/>
<path d="M402.5 577.7V707.0" stroke="#A83410" stroke-width="1.5"/>
<path d="M433.5 574.9V707.0" stroke="#A83410" stroke-width="1.5"/>
<path d="M490.5 689.8V707.0" stroke="#E41414" stroke-width="1.5"/>
<path d="M524.5 690.7V707.0" stroke="#E41414" stroke-width="1.5"/>
<path d="M551.5 691.5V707.0" stroke="#E41414" stroke-width="1.5"/>
<path d="M660.5 694.0V707.0" stroke="#E41414" stroke-width="1.5"/>
<path d="M685.5 694.1V707.0" stroke="#E41414" stroke-width="1.5"/>
<path d="M729.5 694.2V707.0" stroke="#E41414" stroke-width="1.5"/>
<path d="M766.5 694.2V707.0" stroke="#E41414" stroke-width="1.5"/>
<path d="M799.5 694.3V707.0" stroke="#E41414" stroke-width="1.5"/>
<path d="M874.5 694.5V707.0" stroke="#E41414" stroke-width="1.5"/>
<path d="M918.5 694.6V707.0" stroke="#E41414" stroke-width="1.5"/>
<path d="M968.5 694.7V707.0" stroke="#E41414" stroke-width="1.5"/>
<path d="M1002.5 694.7V707.0" stroke="#E41414" stroke-width="1.5"/>
<path d="M1066.5 694.9V707.0" stroke="#E41414" stroke-width="1.5"/>
<path d="M1091.5 694.9V707.0" stroke="#E41414" stroke-width="1.5"/>
<path d="M1163.5 695.1V707.0" stroke="#E41414" stroke-width="1.5"/>
<path d="M1198.5 695.1V707.0" stroke="#E41414" stroke-width="1.5"/>
<path d="M1233.5 695.1V707.0" stroke="#E41414" stroke-width="1.5"/>
<path d="M1266.5 694.3V707.0" stroke="#E41414" stroke-width="1.5"/>
<rect x="251.5" y="661.5" width="26" height="13.7" fill="#FFFF00" stroke="#2A8400" stroke-width="1"/>
<text x="254.2" y="672.6" font-family="'Liberation Sans', sans-serif" font-size="12" fill="#000" textLength="20.5" lengthAdjust="spacing">508</text>
<rect x="288.5" y="662.5" width="26" height="13.7" fill="#FFFF00" stroke="#2A8400" stroke-width="1"/>
<text x="291.2" y="673.6" font-family="'Liberation Sans', sans-serif" font-size="12" fill="#000" textLength="20.5" lengthAdjust="spacing">535</text>
<rect x="352.5" y="688.5" width="26" height="13.7" fill="#FFFF00" stroke="#2A8400" stroke-width="1"/>
<text x="355.2" y="699.6" font-family="'Liberation Sans', sans-serif" font-size="12" fill="#000" textLength="20.5" lengthAdjust="spacing">584</text>
<rect x="388.5" y="688.5" width="26" height="13.7" fill="#FFFF00" stroke="#2A8400" stroke-width="1"/>
<text x="391.2" y="699.6" font-family="'Liberation Sans', sans-serif" font-size="12" fill="#000" textLength="20.5" lengthAdjust="spacing">610</text>
<rect x="419.5" y="688.5" width="26" height="13.7" fill="#FFFF00" stroke="#2A8400" stroke-width="1"/>
<text x="422.2" y="699.6" font-family="'Liberation Sans', sans-serif" font-size="12" fill="#000" textLength="20.5" lengthAdjust="spacing">634</text>
<rect x="476.5" y="672.5" width="26" height="13.7" fill="#FFFF00" stroke="#2A8400" stroke-width="1"/>
<text x="479.2" y="683.6" font-family="'Liberation Sans', sans-serif" font-size="12" fill="#000" textLength="20.5" lengthAdjust="spacing">676</text>
<rect x="510.5" y="673.5" width="26" height="13.7" fill="#FFFF00" stroke="#2A8400" stroke-width="1"/>
<text x="513.2" y="684.6" font-family="'Liberation Sans', sans-serif" font-size="12" fill="#000" textLength="20.5" lengthAdjust="spacing">702</text>
<rect x="537.5" y="673.5" width="26" height="13.7" fill="#FFFF00" stroke="#2A8400" stroke-width="1"/>
<text x="540.2" y="684.6" font-family="'Liberation Sans', sans-serif" font-size="12" fill="#000" textLength="20.5" lengthAdjust="spacing">722</text>
<rect x="646.5" y="675.5" width="26" height="13.7" fill="#FFFF00" stroke="#2A8400" stroke-width="1"/>
<text x="649.2" y="686.6" font-family="'Liberation Sans', sans-serif" font-size="12" fill="#000" textLength="20.5" lengthAdjust="spacing">804</text>
<rect x="672.5" y="675.5" width="26" height="13.7" fill="#FFFF00" stroke="#2A8400" stroke-width="1"/>
<text x="675.2" y="686.6" font-family="'Liberation Sans', sans-serif" font-size="12" fill="#000" textLength="20.5" lengthAdjust="spacing">823</text>
<rect x="715.5" y="676.5" width="26" height="13.7" fill="#FFFF00" stroke="#2A8400" stroke-width="1"/>
<text x="718.2" y="687.6" font-family="'Liberation Sans', sans-serif" font-size="12" fill="#000" textLength="20.5" lengthAdjust="spacing">856</text>
<rect x="752.5" y="676.5" width="26" height="13.7" fill="#FFFF00" stroke="#2A8400" stroke-width="1"/>
<text x="755.2" y="687.6" font-family="'Liberation Sans', sans-serif" font-size="12" fill="#000" textLength="20.5" lengthAdjust="spacing">884</text>
<rect x="785.5" y="676.5" width="26" height="13.7" fill="#FFFF00" stroke="#2A8400" stroke-width="1"/>
<text x="788.2" y="687.6" font-family="'Liberation Sans', sans-serif" font-size="12" fill="#000" textLength="20.5" lengthAdjust="spacing">909</text>
<rect x="860.5" y="677.5" width="26" height="13.7" fill="#FFFF00" stroke="#2A8400" stroke-width="1"/>
<text x="863.2" y="688.6" font-family="'Liberation Sans', sans-serif" font-size="12" fill="#000" textLength="20.5" lengthAdjust="spacing">965</text>
<rect x="904.5" y="677.5" width="26" height="13.7" fill="#FFFF00" stroke="#2A8400" stroke-width="1"/>
<text x="907.2" y="688.6" font-family="'Liberation Sans', sans-serif" font-size="12" fill="#000" textLength="20.5" lengthAdjust="spacing">998</text>
<rect x="954.5" y="677.5" width="33.8" height="13.7" fill="#FFFF00" stroke="#2A8400" stroke-width="1"/>
<text x="957.3" y="688.6" font-family="'Liberation Sans', sans-serif" font-size="12" fill="#000" textLength="27.2" lengthAdjust="spacing">1036</text>
<rect x="989.0" y="677.5" width="33.8" height="13.7" fill="#FFFF00" stroke="#2A8400" stroke-width="1"/>
<text x="991.8" y="688.6" font-family="'Liberation Sans', sans-serif" font-size="12" fill="#000" textLength="27.2" lengthAdjust="spacing">1061</text>
<rect x="1053.0" y="677.5" width="33.8" height="13.7" fill="#FFFF00" stroke="#2A8400" stroke-width="1"/>
<text x="1055.8" y="688.6" font-family="'Liberation Sans', sans-serif" font-size="12" fill="#000" textLength="27.2" lengthAdjust="spacing">1109</text>
<rect x="1078.0" y="678.5" width="33.8" height="13.7" fill="#FFFF00" stroke="#2A8400" stroke-width="1"/>
<text x="1080.8" y="689.6" font-family="'Liberation Sans', sans-serif" font-size="12" fill="#000" textLength="27.2" lengthAdjust="spacing">1128</text>
<rect x="1150.0" y="677.5" width="33.8" height="13.7" fill="#FFFF00" stroke="#2A8400" stroke-width="1"/>
<text x="1152.8" y="688.6" font-family="'Liberation Sans', sans-serif" font-size="12" fill="#000" textLength="27.2" lengthAdjust="spacing">1182</text>
<rect x="1184.5" y="676.5" width="33.8" height="13.7" fill="#FFFF00" stroke="#2A8400" stroke-width="1"/>
<text x="1187.3" y="687.6" font-family="'Liberation Sans', sans-serif" font-size="12" fill="#000" textLength="27.2" lengthAdjust="spacing">1208</text>
<rect x="1219.5" y="676.5" width="33.8" height="13.7" fill="#FFFF00" stroke="#2A8400" stroke-width="1"/>
<text x="1222.3" y="687.6" font-family="'Liberation Sans', sans-serif" font-size="12" fill="#000" textLength="27.2" lengthAdjust="spacing">1235</text>
<rect x="1253.0" y="675.5" width="33.8" height="13.7" fill="#FFFF00" stroke="#2A8400" stroke-width="1"/>
<text x="1255.8" y="686.6" font-family="'Liberation Sans', sans-serif" font-size="12" fill="#000" textLength="27.2" lengthAdjust="spacing">1259</text>
<rect x="156.6" y="386.5" width="26" height="14.5" fill="#FFFF00" stroke="#C8420A" stroke-width="1.2"/>
<text x="159.4" y="398.2" font-family="'Liberation Sans', sans-serif" font-size="12" fill="#000" textLength="20.5" lengthAdjust="spacing">436</text>
<rect x="302.6" y="386.5" width="26" height="14.5" fill="#FFFF00" stroke="#C8420A" stroke-width="1.2"/>
<text x="305.4" y="398.2" font-family="'Liberation Sans', sans-serif" font-size="12" fill="#000" textLength="20.5" lengthAdjust="spacing">546</text>
</svg><div class="a " style="left:1355px;top:385px;width:12.3px;height:323.5px;background:#F2F2DD;border-left:2px solid #7E7E7E;border-top:2px solid #7E7E7E;border-right:1px solid #FAFAF4;border-bottom:1px solid #FFFFFF;"></div>
<div class="a btn" style="left:921.8px;top:716.3px;width:71.2px;height:15px;"></div>
<div class="a btn" style="left:999.5px;top:716.3px;width:44.5px;height:15px;"></div>
<div class="a btny" style="left:1050.5px;top:716.5px;width:48.5px;height:14.5px;"></div>
<div class="a btny" style="left:1105.5px;top:716.5px;width:54.5px;height:14.5px;"></div>
<div class="a fld" style="left:1222.5px;top:714.8px;width:33.5px;height:15.4px;"></div>
<div class="a btny" style="left:1275.5px;top:716.5px;width:74.5px;height:14.5px;"></div>

<span class="t" id="t0" style="left:34.60px;top:12.00px;font-size:12.5px;color:#4E586A;font-family:'Liberation Sans', sans-serif;transform:scaleX(0.9359);">Theremino Spectrometer - V3.0</span>
<span class="t" id="t1" style="left:26.90px;top:35.00px;font-size:12.5px;color:#000;font-family:'Liberation Sans', sans-serif;transform:scaleX(0.9015);">File</span>
<span class="t" id="t2" style="left:67.40px;top:35.00px;font-size:12.5px;color:#000;font-family:'Liberation Sans', sans-serif;transform:scaleX(0.9816);">Tools</span>
<span class="t" id="t3" style="left:117.25px;top:35.00px;font-size:12.5px;color:#000;font-family:'Liberation Sans', sans-serif;transform:scaleX(0.9531);">Language</span>
<span class="t" id="t4" style="left:191.43px;top:35.00px;font-size:12.5px;color:#000;font-family:'Liberation Sans', sans-serif;transform:scaleX(0.9695);">Help</span>
<span class="t" id="t5" style="left:239.20px;top:35.00px;font-size:12.5px;color:#000;font-family:'Liberation Sans', sans-serif;transform:scaleX(0.9942);">About</span>
<span class="t" id="t6" style="left:39.60px;top:59.00px;font-size:12.5px;color:#000;font-family:'Liberation Sans', sans-serif;transform:scaleX(0.9551);">Video controls</span>
<span class="t" id="t7" style="left:151.50px;top:59.00px;font-size:12.5px;color:#000;font-family:'Liberation Sans', sans-serif;transform:scaleX(0.9532);">Spectrum image</span>
<span class="t" id="t8" style="left:274.80px;top:59.00px;font-size:12.5px;color:#000;font-family:'Liberation Sans', sans-serif;transform:scaleX(0.9290);">Camera image</span>
<span class="t" id="t9" style="left:387.40px;top:59.00px;font-size:12.5px;color:#000;font-family:'Liberation Sans', sans-serif;transform:scaleX(0.9817);">Total image</span>
<span class="t" id="t10" style="left:486.30px;top:59.00px;font-size:12.5px;color:#000;font-family:'Liberation Sans', sans-serif;transform:scaleX(0.9227);">Write DataFile</span>
<span class="t" id="t11" style="left:1330.56px;top:59.00px;font-size:12.5px;color:#000;font-family:'Liberation Sans', sans-serif;transform:scaleX(0.9373);">Run</span>
<span class="t" id="t12" style="left:24.50px;top:83.00px;font-size:11px;color:#121272;font-family:'Liberation Sans', sans-serif;transform:scaleX(0.9781);">Video Input Device</span>
<span class="t" id="t13" style="left:29.30px;top:108.00px;font-size:11px;color:#000;font-family:'Liberation Sans', sans-serif;transform:scaleX(0.9542);">0 HD USB Camera</span>
<span class="t" id="t14" style="left:34.00px;top:136.00px;font-size:11px;color:#121272;font-family:'Liberation Sans', sans-serif;transform:scaleX(0.9684);">1280 x 720</span>
<span class="t" id="t15" style="left:108.00px;top:136.00px;font-size:11px;color:#121272;font-family:'Liberation Sans', sans-serif;transform:scaleX(0.9611);">2 fps</span>
<span class="t" id="t16" style="left:159.20px;top:136.00px;font-size:11px;color:#121272;font-family:'Liberation Sans', sans-serif;transform:scaleX(0.9078);">8 mS</span>
<span class="t" id="t17" style="left:24.50px;top:166.00px;font-size:11px;color:#121272;font-family:'Liberation Sans', sans-serif;transform:scaleX(0.9401);">Save image</span>
<span class="t" id="t18" style="left:198.30px;top:181.00px;font-size:11px;color:#000;font-family:'Liberation Sans', sans-serif;transform:scaleX(0.9082);">JPEG quality</span>
<span class="t" id="t19" style="left:269.50px;top:180.00px;font-size:12px;color:#000;font-family:'Liberation Sans', sans-serif;transform:scaleX(0.9829);">100</span>
<span class="t" id="t20" style="left:32.30px;top:188.00px;font-size:11px;color:#000;font-family:'Liberation Sans', sans-serif;transform:scaleX(0.9307);">Name</span>
<span class="t" id="t21" style="left:69.00px;top:206.00px;font-size:10.2px;color:#2C2C2C;font-family:'Liberation Mono', monospace;-webkit-text-stroke:0.35px #2C2C2C;letter-spacing:0.933px;">Ne2h Visible 2</span>
<span class="t" id="t22" style="left:216.00px;top:205.00px;font-size:13px;color:#000;font-family:'Liberation Sans', sans-serif;font-weight:bold;">.</span>
<span class="t" id="t23" style="left:232.50px;top:207.00px;font-size:10.2px;color:#2C2C2C;font-family:'Liberation Mono', monospace;-webkit-text-stroke:0.35px #2C2C2C;letter-spacing:0.387px;">JPG</span>
<span class="t" id="t24" style="left:32.30px;top:228.00px;font-size:11px;color:#000;font-family:'Liberation Sans', sans-serif;transform:scaleX(0.9845);">Path for Images and the DataFile</span>
<span class="t" id="t25" style="left:61.30px;top:245.50px;font-size:10.2px;color:#2C2C2C;font-family:'Liberation Mono', monospace;-webkit-text-stroke:0.35px #2C2C2C;letter-spacing:0.904px;">C:\Users\GaryG\Desktop\infared</span>
<span class="t" id="t26" style="left:24.50px;top:286.00px;font-size:11px;color:#121272;font-family:'Liberation Sans', sans-serif;transform:scaleX(0.9863);">Sync and integration</span>
<span class="t" id="t27" style="left:64.30px;top:310.00px;font-size:11px;color:#000;font-family:'Liberation Sans', sans-serif;transform:scaleX(0.9507);">Slot Run</span>
<span class="t" id="t28" style="left:61.30px;top:332.00px;font-size:11px;color:#000;font-family:'Liberation Sans', sans-serif;transform:scaleX(0.9658);">Slot Stop</span>
<span class="t" id="t29" style="left:40.30px;top:354.00px;font-size:11px;color:#000;font-family:'Liberation Sans', sans-serif;transform:scaleX(0.9680);">Slot WriteFile</span>
<span class="t" id="t30" style="left:123.20px;top:308.60px;font-size:12px;color:#000;font-family:'Liberation Sans', sans-serif;">-1</span>
<span class="t" id="t31" style="left:123.20px;top:330.60px;font-size:12px;color:#000;font-family:'Liberation Sans', sans-serif;">-1</span>
<span class="t" id="t32" style="left:123.20px;top:352.60px;font-size:12px;color:#000;font-family:'Liberation Sans', sans-serif;">-1</span>
<span class="t" id="t33" style="left:200.30px;top:306.00px;font-size:11px;color:#000;font-family:'Liberation Sans', sans-serif;transform:scaleX(0.9421);">Rising speed</span>
<span class="t" id="t34" style="left:198.30px;top:328.00px;font-size:11px;color:#000;font-family:'Liberation Sans', sans-serif;transform:scaleX(0.9462);">Falling speed</span>
<span class="t" id="t35" style="left:276.30px;top:305.00px;font-size:12px;color:#000;font-family:'Liberation Sans', sans-serif;transform:scaleX(0.9653);">30</span>
<span class="t" id="t36" style="left:276.30px;top:327.00px;font-size:12px;color:#000;font-family:'Liberation Sans', sans-serif;transform:scaleX(0.9653);">30</span>
<span class="t" id="t37" style="left:178.50px;top:352.60px;font-size:11px;color:#000;font-family:'Liberation Sans', sans-serif;transform:scaleX(1.0188);">Reset spectrum data</span>
<span class="t" id="t38" style="left:326.18px;top:83.00px;font-size:11px;color:#121272;font-family:'Liberation Sans', sans-serif;transform:scaleX(1.1192);">Input</span>
<span class="t" id="t39" style="left:331.00px;top:118.00px;font-size:11px;color:#000;font-family:'Liberation Sans', sans-serif;transform:scaleX(0.9371);">Flip</span>
<span class="t" id="t40" style="left:331.00px;top:186.00px;font-size:11px;color:#000;font-family:'Liberation Sans', sans-serif;transform:scaleX(0.8782);">Size Y</span>
<span class="t" id="t41" style="left:343.50px;top:204.00px;font-size:12px;color:#000;font-family:'Liberation Sans', sans-serif;">5</span>
<span class="t" id="t42" style="left:330.50px;top:245.00px;font-size:11px;color:#000;font-family:'Liberation Sans', sans-serif;transform:scaleX(0.9479);">Start Y</span>
<span class="t" id="t43" style="left:340.20px;top:262.00px;font-size:12px;color:#000;font-family:'Liberation Sans', sans-serif;transform:scaleX(0.9507);">43</span>
<span class="t" id="t44" style="left:380.00px;top:359.00px;font-size:11px;color:#000;font-family:'Liberation Sans', sans-serif;transform:scaleX(0.9479);">Start X</span>
<span class="t" id="t45" style="left:433.00px;top:358.00px;font-size:12px;color:#000;font-family:'Liberation Sans', sans-serif;">0</span>
<span class="t" id="t46" style="left:1286.00px;top:359.00px;font-size:11px;color:#000;font-family:'Liberation Sans', sans-serif;transform:scaleX(0.8815);">End X</span>
<span class="t" id="t47" style="left:1322.50px;top:358.00px;font-size:12px;color:#000;font-family:'Liberation Sans', sans-serif;transform:scaleX(0.9807);">1000</span>
<span class="t" id="t48" style="left:120.10px;top:388.00px;font-size:11.3px;color:#000;font-family:'Liberation Sans', sans-serif;transform:scaleX(0.9588);">400</span>
<span class="t" id="t49" style="left:253.27px;top:388.00px;font-size:11.3px;color:#000;font-family:'Liberation Sans', sans-serif;transform:scaleX(0.9588);">500</span>
<span class="t" id="t50" style="left:386.44px;top:388.00px;font-size:11.3px;color:#000;font-family:'Liberation Sans', sans-serif;transform:scaleX(0.9588);">600</span>
<span class="t" id="t51" style="left:519.61px;top:388.00px;font-size:11.3px;color:#000;font-family:'Liberation Sans', sans-serif;transform:scaleX(0.9588);">700</span>
<span class="t" id="t52" style="left:652.78px;top:388.00px;font-size:11.3px;color:#000;font-family:'Liberation Sans', sans-serif;transform:scaleX(0.9588);">800</span>
<span class="t" id="t53" style="left:785.95px;top:388.00px;font-size:11.3px;color:#000;font-family:'Liberation Sans', sans-serif;transform:scaleX(0.9588);">900</span>
<span class="t" id="t54" style="left:919.12px;top:388.00px;font-size:11.3px;color:#000;font-family:'Liberation Sans', sans-serif;transform:scaleX(0.9659);">1000</span>
<span class="t" id="t55" style="left:1052.29px;top:388.00px;font-size:11.3px;color:#000;font-family:'Liberation Sans', sans-serif;">1100</span>
<span class="t" id="t56" style="left:1185.46px;top:388.00px;font-size:11.3px;color:#000;font-family:'Liberation Sans', sans-serif;transform:scaleX(0.9659);">1200</span>
<span class="t" id="t57" style="left:1318.63px;top:388.00px;font-size:11.3px;color:#000;font-family:'Liberation Sans', sans-serif;transform:scaleX(0.9659);">1300</span>
<span class="t" id="t58" style="left:18.30px;top:717.50px;font-size:12px;color:#000;font-family:'Liberation Sans', sans-serif;transform:scaleX(1.0264);">Max: 583 nm</span>
<span class="t" id="t59" style="left:932.50px;top:716.80px;font-size:11px;color:#000;font-family:'Liberation Sans', sans-serif;transform:scaleX(0.9776);">Reference</span>
<span class="t" id="t60" style="left:1010.50px;top:716.80px;font-size:11px;color:#000;font-family:'Liberation Sans', sans-serif;">Dips</span>
<span class="t" id="t61" style="left:1060.70px;top:716.90px;font-size:11px;color:#6F6F48;font-family:'Liberation Sans', sans-serif;font-weight:bold;text-shadow:1px 1px 0 #FFF27A;transform:scaleX(0.9151);">Peaks</span>
<span class="t" id="t62" style="left:1116.90px;top:716.90px;font-size:11px;color:#6F6F48;font-family:'Liberation Sans', sans-serif;font-weight:bold;text-shadow:1px 1px 0 #FFF27A;transform:scaleX(0.9591);">Colors</span>
<span class="t" id="t63" style="left:1192.30px;top:717.00px;font-size:11px;color:#000;font-family:'Liberation Sans', sans-serif;transform:scaleX(0.9887);">Filter</span>
<span class="t" id="t64" style="left:1233.20px;top:716.00px;font-size:12px;color:#000;font-family:'Liberation Sans', sans-serif;transform:scaleX(0.9727);">30</span>
<span class="t" id="t65" style="left:1288.00px;top:716.90px;font-size:11px;color:#6F6F48;font-family:'Liberation Sans', sans-serif;font-weight:bold;text-shadow:1px 1px 0 #FFF27A;transform:scaleX(0.9405);">Trim scale</span>
</body></html>
